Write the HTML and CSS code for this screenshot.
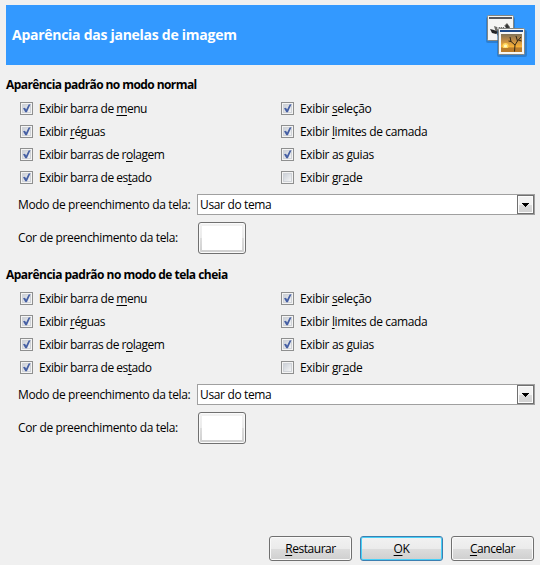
FILE: index.html
```html
<!DOCTYPE html>
<html lang="pt-BR">
<head>
<meta charset="utf-8">
<title>Aparência das janelas de imagem</title>
<link rel="stylesheet" href="styles.css">
</head>
<body>
<svg width="0" height="0" class="defs">
  <defs>
    <linearGradient id="boxfill" x1="0" y1="0" x2="1" y2="1"><stop offset="0" stop-color="#c9ced6"/><stop offset="1" stop-color="#f6f6f6"/></linearGradient>
    <linearGradient id="sky" x1="0" y1="0" x2="0" y2="1"><stop offset="0" stop-color="#7f7257"/><stop offset=".35" stop-color="#c08b45"/><stop offset=".7" stop-color="#f8b136"/><stop offset=".8" stop-color="#a87430"/><stop offset="1" stop-color="#bd8032"/></linearGradient>
    <symbol id="box" viewBox="0 0 13 13">
      <rect x=".5" y=".5" width="12" height="12" fill="#f4f4f4" stroke="#8e8f8f"/>
      <rect x="2.5" y="2.5" width="8" height="8" fill="url(#boxfill)" stroke="#d0d3d8"/>
    </symbol>
    <symbol id="checked" viewBox="0 0 13 13">
      <use href="#box"/>
      <path d="M3 6.2L5 5.7L6.1 7.6L8.6 2.5L10.5 2.3L6.9 10.2H5.3Z" fill="#4660a4"/>
    </symbol>
  </defs>
</svg>
<main class="dialog">
  <header class="banner">
    <h1>Aparência das janelas de imagem</h1>
    <svg class="icon" width="42" height="43" viewBox="0 0 42 43">
      <rect x="0" y="2" width="29" height="26" rx="2" fill="#2468ac" opacity=".55"/>
      <rect x="1.5" y=".5" width="26" height="25" rx="1" fill="#f5f5f3" stroke="#858782"/>
      <rect x="3" y="2" width="23" height="2" fill="#55585e"/>
      <path d="M8 11L11 12H17L21 8L24 12V18L21 21H12L10 18Z" fill="#6d6d69"/>
      <path d="M21 9L23 12L22 14L19 12Z" fill="#333"/>
      <circle cx="13" cy="13" r="1.8" fill="#fff"/><circle cx="17.8" cy="12.8" r="1.8" fill="#fff"/>
      <circle cx="13.3" cy="13" r=".8" fill="#111"/><circle cx="17.5" cy="13" r=".8" fill="#111"/>
      <path d="M4 14L8 15L12 17L10 19L6 18Z" fill="#252525"/>
      <rect x="11" y="15" width="30" height="27" rx="2" fill="#2468ac" opacity=".55"/>
      <rect x="12.5" y="13.5" width="26" height="26" rx="1" fill="#f7f7f5" stroke="#858782"/>
      <rect x="14" y="15" width="23" height="2" fill="#204a87"/>
      <rect x="15" y="19" width="21" height="18" fill="url(#sky)"/>
      <circle cx="19.5" cy="31" r="3" fill="#ffd65b"/>
      <circle cx="19.5" cy="31" r="1.6" fill="#fff9c5"/>
      <path d="M15 33H36V37H15Z" fill="#ba7c2b"/>
      <path d="M28.5 36.5L29 30L25 26.5L24 22M25 26.5L22.5 26M29 30L31.5 26L30 21M31.5 26L35 22M32.5 25L35.5 26" fill="none" stroke="#302616" stroke-width="1"/>
    </svg>
  </header>

  <section>
    <h2>Aparência padrão no modo normal</h2>
    <div class="options">
      <label><svg><use href="#checked"/></svg>Exibir barra de <u>m</u>enu</label>
      <label><svg><use href="#checked"/></svg>Exibir <u>s</u>eleção</label>
      <label><svg><use href="#checked"/></svg>Exibir <u>r</u>éguas</label>
      <label><svg><use href="#checked"/></svg>Exibir <u>l</u>imites de camada</label>
      <label><svg><use href="#checked"/></svg>Exibir barras de r<u>o</u>lagem</label>
      <label><svg><use href="#checked"/></svg>Exibir as guias</label>
      <label><svg><use href="#checked"/></svg>Exibir barra de es<u>t</u>ado</label>
      <label><svg><use href="#box"/></svg>Exibir gr<u>a</u>de</label>
    </div>
    <div class="field mode"><span>Modo de preenchimento da tela:</span>
      <div class="select"><span>Usar do tema</span><div class="drop"><svg width="7" height="4" viewBox="0 0 7 4"><path d="M0 0H7V1H6V2H5V3H4V4H3V3H2V2H1V1H0Z"/></svg></div></div>
    </div>
    <div class="field color"><span>Cor de preenchimento da tela:</span><div class="swatch"><div></div></div></div>
  </section>

  <section>
    <h2>Aparência padrão no modo de tela cheia</h2>
    <div class="options">
      <label><svg><use href="#checked"/></svg>Exibir barra de <u>m</u>enu</label>
      <label><svg><use href="#checked"/></svg>Exibir <u>s</u>eleção</label>
      <label><svg><use href="#checked"/></svg>Exibir <u>r</u>éguas</label>
      <label><svg><use href="#checked"/></svg>Exibir <u>l</u>imites de camada</label>
      <label><svg><use href="#checked"/></svg>Exibir barras de r<u>o</u>lagem</label>
      <label><svg><use href="#checked"/></svg>Exibir as guias</label>
      <label><svg><use href="#checked"/></svg>Exibir barra de es<u>t</u>ado</label>
      <label><svg><use href="#box"/></svg>Exibir gr<u>a</u>de</label>
    </div>
    <div class="field mode"><span>Modo de preenchimento da tela:</span>
      <div class="select"><span>Usar do tema</span><div class="drop"><svg width="7" height="4" viewBox="0 0 7 4"><path d="M0 0H7V1H6V2H5V3H4V4H3V3H2V2H1V1H0Z"/></svg></div></div>
    </div>
    <div class="field color"><span>Cor de preenchimento da tela:</span><div class="swatch"><div></div></div></div>
  </section>

  <footer>
    <button><span><u>R</u>estaurar</span></button>
    <button class="default"><span><u>O</u>K</span></button>
    <button><span><u>C</u>ancelar</span></button>
  </footer>
</main>
</body>
</html>
```
FILE: styles.css
```css
* { box-sizing: border-box; }
body {
  margin: 0;
  background: #f0f0f0;
  color: #000;
  font: 12px/16px "Open Sans", "Noto Sans", sans-serif;
  letter-spacing: -0.35px;
  white-space: nowrap;
}
.defs { display: block; height: 0; }
.dialog {
  height: 565px;
  padding: 5px 5px 4px 6px;
  display: flex;
  flex-direction: column;
}
.banner {
  height: 60px;
  padding: 10px 7px 0 6px;
  background: #3399ff;
  display: flex;
  justify-content: space-between;
  margin-bottom: 14px;
}
h1 {
  margin: 11px 0 0;
  color: #fff;
  font-size: 14px;
  line-height: 18px;
  letter-spacing: -0.27px;
}
.icon { flex: none; }
section { height: 190px; }
h2 {
  margin: 0;
  height: 18px;
  font-size: 12px;
  line-height: 12px;
  letter-spacing: -0.58px;
}
section + section h2 { letter-spacing: -0.52px; }
.options {
  display: grid;
  grid-template-columns: 261px 1fr;
  grid-auto-rows: 23px;
  padding-left: 14px;
}
label { display: flex; align-items: center; white-space: pre; }
label:nth-child(odd) { letter-spacing: -0.49px; }
label svg { width: 13px; height: 13px; margin-right: 6px; }
u { text-decoration-thickness: 1px; text-underline-offset: 2px; }
.field {
  display: grid;
  grid-template-columns: 179px 1fr;
  align-items: center;
  padding-left: 12px;
}
.mode { height: 21px; margin-top: 5px; }
.color { height: 32px; margin-top: 7px; }
.select {
  height: 21px;
  border: 1px solid #a0a0a0;
  background: #fff;
  display: flex;
  align-items: center;
  justify-content: space-between;
  padding-left: 2px;
}
.drop {
  width: 17px;
  height: 19px;
  border: 1px solid #707070;
  box-shadow: inset 0 0 0 1px #fcfcfc;
  background: linear-gradient(#f2f2f2 50%, #ddd 50%, #d0d0d0);
  display: grid;
  place-items: center;
}
.swatch {
  width: 48px;
  height: 32px;
  margin-left: 1px;
  border: 1px solid #707070;
  border-radius: 3px;
  padding: 3px;
  box-shadow: inset 0 0 0 1px #fafafa;
  background: linear-gradient(#f2f2f2, #ebebeb 50%, #ddd 50%, #cfcfcf);
}
.swatch div { height: 24px; background: #fff; }
footer {
  margin-top: auto;
  margin-right: 1px;
  display: flex;
  justify-content: flex-end;
  gap: 8px;
}
button {
  width: 83px;
  height: 25px;
  padding: 0;
  border: 1px solid #707070;
  border-radius: 3px;
  box-shadow: inset 0 0 0 1px #fafafa;
  background: linear-gradient(#f2f2f2, #ebebeb 50%, #ddd 50%, #cfcfcf);
  color: #000;
  font: inherit;
  letter-spacing: -0.45px;
}
.default { border-color: #3c7fb1; box-shadow: inset 0 0 0 1px #48d0f7; }
```
